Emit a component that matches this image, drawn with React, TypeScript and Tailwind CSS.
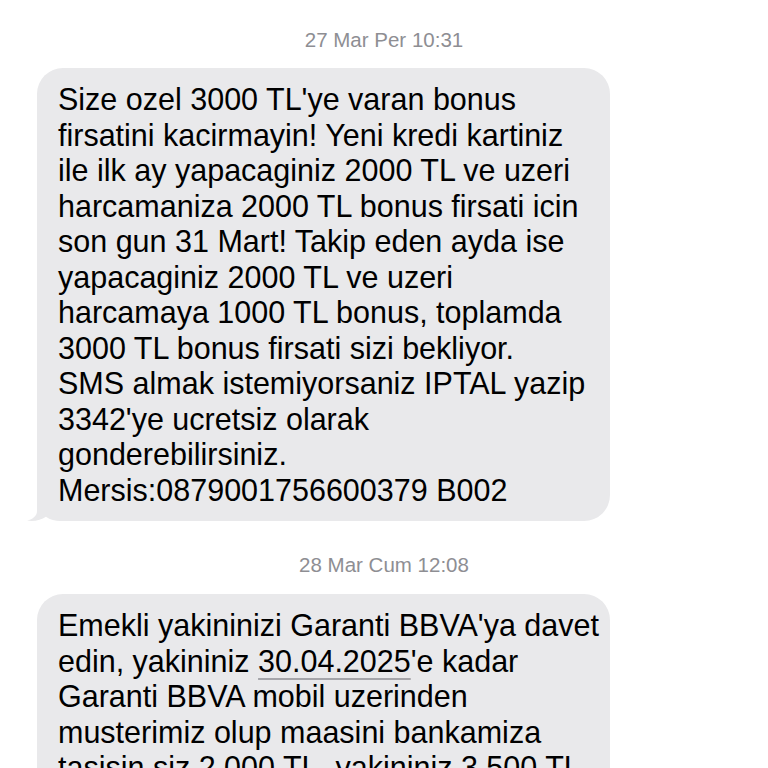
import React from "react";

const msg1 = [
  "Size ozel 3000 TL'ye varan bonus",
  "firsatini kacirmayin! Yeni kredi kartiniz",
  "ile ilk ay yapacaginiz 2000 TL ve uzeri",
  "harcamaniza 2000 TL bonus firsati icin",
  "son gun 31 Mart! Takip eden ayda ise",
  "yapacaginiz 2000 TL ve uzeri",
  "harcamaya 1000 TL bonus, toplamda",
  "3000 TL bonus firsati sizi bekliyor.",
  "SMS almak istemiyorsaniz IPTAL yazip",
  "3342'ye ucretsiz olarak",
  "gonderebilirsiniz.",
  "Mersis:0879001756600379 B002",
];

function Tail() {
  return (
    <svg
      className="absolute left-[-12px] bottom-[-1px]"
      width="40"
      height="28"
      viewBox="0 0 40 28"
    >
      <path
        d="M12 0 L12 17 C12 22 8 25 2 26.6 C9 27.8 16 26.2 21 22.8 C25 25.8 30 27 36 27 L40 27 L40 0 Z"
        fill="#e9e9eb"
      />
    </svg>
  );
}

function Stamp({ children }: { children: React.ReactNode }) {
  return (
    <div className="text-center text-[20.5px] leading-[24px] text-[#8e8e93]">
      {children}
    </div>
  );
}

export default function App() {
  return (
    <div
      className="h-[768px] w-[768px] overflow-hidden bg-white"
      style={{ fontFamily: '"Liberation Sans", Arial, sans-serif' }}
    >
      <div className="flex flex-col pt-[28px]">
        <Stamp>27 Mar Per 10:31</Stamp>
        <div className="mt-[16px] pl-[37px]">
          <div className="relative w-[573px] rounded-[26px] bg-[#e9e9eb] pl-[21px] pr-[16px] pt-[14px] pb-[13px] text-[30.5px] leading-[35.5px] text-black">
            <Tail />
            <div className="relative">
              {msg1.map((l, i) => (
                <div key={i} className="whitespace-nowrap">
                  {l}
                </div>
              ))}
            </div>
          </div>
        </div>
        <div className="mt-[32px]">
          <Stamp>28 Mar Cum 12:08</Stamp>
        </div>
        <div className="mt-[17px] pl-[37px]">
          <div className="relative w-[573px] rounded-[26px] bg-[#e9e9eb] pl-[21px] pr-[16px] pt-[14px] pb-[13px] text-[30.5px] leading-[35.5px] text-black">
            <div className="whitespace-nowrap">Emekli yakininizi Garanti BBVA'ya davet</div>
            <div className="whitespace-nowrap">
              edin, yakininiz{" "}
              <span className="underline decoration-[#a5a5aa] decoration-[1.5px] underline-offset-[6px]">
                30.04.2025
              </span>
              'e kadar
            </div>
            <div className="whitespace-nowrap">Garanti BBVA mobil uzerinden</div>
            <div className="whitespace-nowrap">musterimiz olup maasini bankamiza</div>
            <div className="whitespace-nowrap">tasisin siz 2.000 TL, yakininiz 3.500 TL</div>
            <div className="whitespace-nowrap">bonus kazansin. Detaylar</div>
            <div className="whitespace-nowrap">garantibbva.com.tr'de</div>
          </div>
        </div>
      </div>
    </div>
  );
}
